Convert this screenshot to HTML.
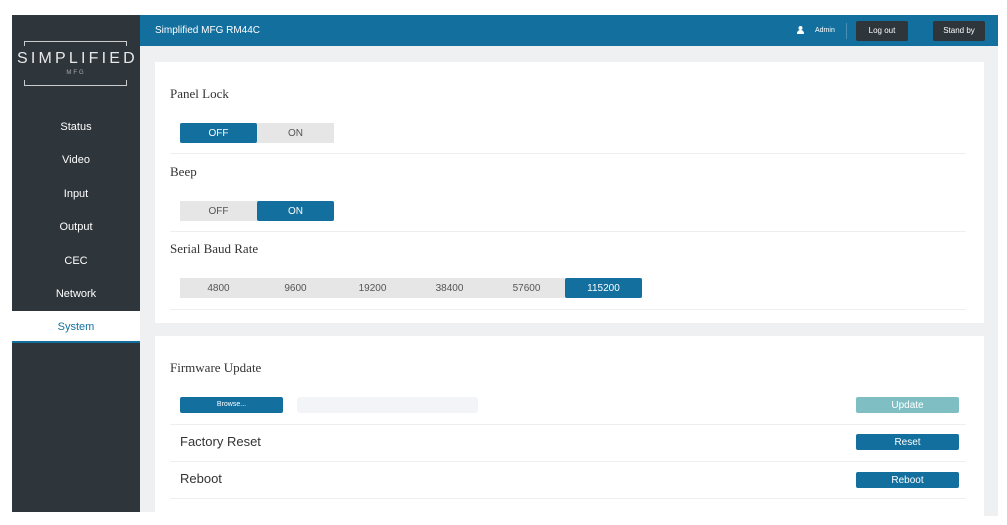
<!DOCTYPE html><html><head><style>
body{margin:0;width:1007px;height:525px;background:#fff;position:relative;overflow:hidden;font-family:"Liberation Sans",sans-serif}
.a{position:absolute}
.side{left:12px;top:15px;width:128px;height:497px;background:#2e353b}
.nav{left:12px;width:128px;text-align:center;color:#fff;font-size:11px}
.top{left:140px;top:15px;width:858px;height:31px;background:#136f9e}
.main{left:140px;top:46px;width:858px;height:470px;background:#eef0f2}
.card{background:#fff;left:155px;width:829px}
.lbl{font-family:"Liberation Serif",serif;font-size:13px;color:#333;left:170px}
.seg{height:20px;background:#e6e6e6;font-size:10px;color:#555;display:flex}
.seg div{width:77px;text-align:center;line-height:21px;height:20px}
.seg .on{background:#136f9e;color:#fff;border-radius:2px}
.hr{left:170px;width:796px;height:1px;background:#eeeeee}
.btn{background:#136f9e;color:#fff;font-size:10px;text-align:center;border-radius:2px}
.dbtn{background:#2e353b;color:#fff;font-size:8px;text-align:center;line-height:20px;border-radius:2px;top:21px;height:20px}
.tk{width:1px;height:5px;background:#ccc}
</style></head><body>
<div class="a side"></div>
<div class="a" style="left:24px;top:41px;width:103px;height:1px;background:#ccc"></div>
<div class="a" style="left:24px;top:85px;width:103px;height:1px;background:#ccc"></div>
<div class="a tk" style="left:24px;top:41px"></div><div class="a tk" style="left:126px;top:41px"></div>
<div class="a tk" style="left:24px;top:80px"></div><div class="a tk" style="left:126px;top:80px"></div>
<div class="a" style="left:17px;top:50px;width:120px;color:#e8e8e8;font-size:16px;letter-spacing:3.2px;z-index:2;white-space:nowrap">SIMPLIFIED</div>
<div class="a" style="left:12px;top:70px;width:128px;text-align:center;color:#aaa;font-size:6px;letter-spacing:2px">MFG</div>
<div class="a nav" style="top:121px">Status</div>
<div class="a nav" style="top:154px">Video</div>
<div class="a nav" style="top:188px">Input</div>
<div class="a nav" style="top:221px">Output</div>
<div class="a nav" style="top:255px">CEC</div>
<div class="a nav" style="top:288px">Network</div>
<div class="a" style="left:12px;top:311px;width:128px;height:30px;background:#fff;border-bottom:2px solid #136f9e"></div>
<div class="a nav" style="top:321px;color:#136f9e">System</div>
<div class="a top"></div>
<div class="a" style="left:155px;top:25px;color:#fff;font-size:10px">Simplified MFG RM44C</div>
<svg class="a" style="left:797px;top:26px" width="7" height="8" viewBox="0 0 7 8"><circle cx="3.5" cy="2" r="2" fill="#fff"/><path d="M0 8 Q0 4 3.5 4 Q7 4 7 8Z" fill="#fff"/></svg>
<div class="a" style="left:815px;top:27px;color:#fff;font-size:7px">Admin</div>
<div class="a" style="left:846px;top:23px;width:1px;height:16px;background:#4a8fb5"></div>
<div class="a dbtn" style="left:856px;width:52px">Log out</div>
<div class="a dbtn" style="left:933px;width:52px">Stand by</div>
<div class="a main"></div>
<div class="a card" style="top:62px;height:261px"></div>
<div class="a lbl" style="top:86px">Panel Lock</div>
<div class="a seg" style="left:180px;top:123px;width:154px"><div class="on">OFF</div><div>ON</div></div>
<div class="a hr" style="top:153px"></div>
<div class="a lbl" style="top:164px">Beep</div>
<div class="a seg" style="left:180px;top:201px;width:154px"><div>OFF</div><div class="on">ON</div></div>
<div class="a hr" style="top:231px"></div>
<div class="a lbl" style="top:241px">Serial Baud Rate</div>
<div class="a seg" style="left:180px;top:278px;width:462px"><div>4800</div><div>9600</div><div>19200</div><div>38400</div><div>57600</div><div class="on">115200</div></div>
<div class="a hr" style="top:309px"></div>
<div class="a card" style="top:336px;height:189px"></div>
<div class="a lbl" style="top:360px">Firmware Update</div>
<div class="a btn" style="left:180px;top:397px;width:103px;height:16px;line-height:16px;font-size:7px">Browse...</div>
<div class="a" style="left:297px;top:397px;width:181px;height:16px;background:#f2f4f7;border-radius:3px"></div>
<div class="a btn" style="left:856px;top:397px;width:103px;height:16px;line-height:17px;background:#7fbfc4">Update</div>
<div class="a hr" style="top:424px"></div>
<div class="a" style="left:180px;top:434px;font-size:13px;color:#333">Factory Reset</div>
<div class="a btn" style="left:856px;top:434px;width:103px;height:16px;line-height:17px">Reset</div>
<div class="a hr" style="top:461px"></div>
<div class="a" style="left:180px;top:471px;font-size:13px;color:#333">Reboot</div>
<div class="a btn" style="left:856px;top:472px;width:103px;height:16px;line-height:17px">Reboot</div>
<div class="a hr" style="top:498px"></div>
<div class="a" style="left:0;top:512px;width:155px;height:13px;background:#fff"></div>
</body></html>
